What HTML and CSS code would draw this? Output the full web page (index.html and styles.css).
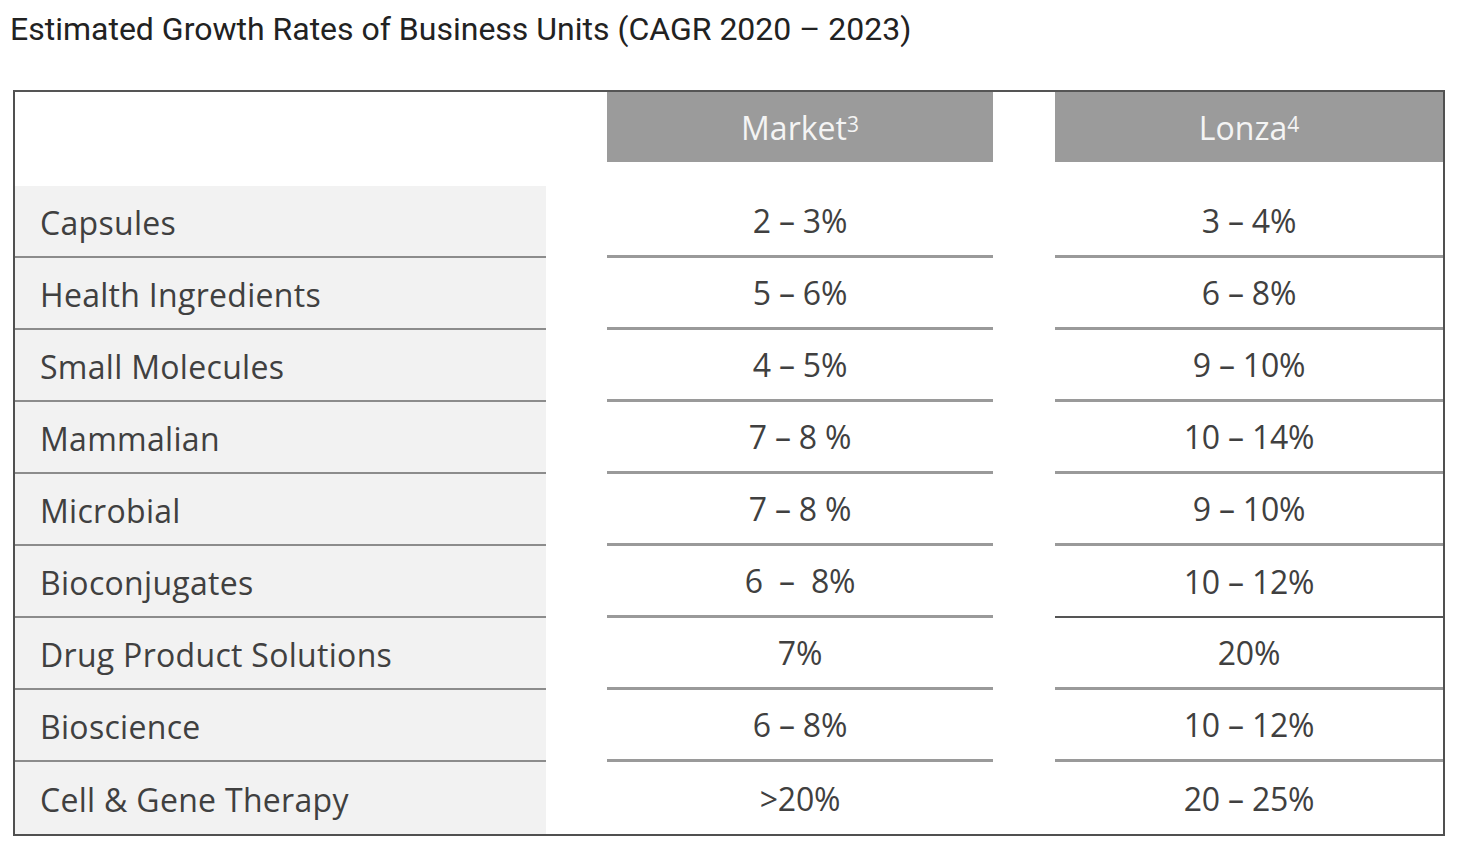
FILE: index.html
```html
<!DOCTYPE html>
<html>
<head>
<meta charset="utf-8">
<link rel="stylesheet" href="styles.css">
</head>
<body>
<h1 class="title">Estimated Growth Rates of Business Units (CAGR 2020 – 2023)</h1>
<div class="frame">
  <div class="grid">
    <div class="head-blank"></div>
    <div class="gap"></div>
    <div class="head"><div class="head-box">Market<sup>3</sup></div></div>
    <div class="gap"></div>
    <div class="head"><div class="head-box">Lonza<sup>4</sup></div></div>

    <div class="label sep">Capsules</div><div class="gap"></div><div class="val sep">2 – 3%</div><div class="gap"></div><div class="val sep">3 – 4%</div>
    <div class="label sep">Health Ingredients</div><div class="gap"></div><div class="val sep">5 – 6%</div><div class="gap"></div><div class="val sep">6 – 8%</div>
    <div class="label sep">Small Molecules</div><div class="gap"></div><div class="val sep">4 – 5%</div><div class="gap"></div><div class="val sep">9 – 10%</div>
    <div class="label sep">Mammalian</div><div class="gap"></div><div class="val sep">7 – 8 %</div><div class="gap"></div><div class="val sep">10 – 14%</div>
    <div class="label sep">Microbial</div><div class="gap"></div><div class="val sep">7 – 8 %</div><div class="gap"></div><div class="val sep">9 – 10%</div>
    <div class="label sep">Bioconjugates</div><div class="gap"></div><div class="val sep">6 &nbsp;–&nbsp; 8%</div><div class="gap"></div><div class="val sep dark">10 – 12%</div>
    <div class="label sep">Drug Product Solutions</div><div class="gap"></div><div class="val sep">7%</div><div class="gap"></div><div class="val sep">20%</div>
    <div class="label sep">Bioscience</div><div class="gap"></div><div class="val sep">6 – 8%</div><div class="gap"></div><div class="val sep">10 – 12%</div>
    <div class="label">Cell &amp; Gene Therapy</div><div class="gap"></div><div class="val">&gt;20%</div><div class="gap"></div><div class="val">20 – 25%</div>
  </div>
</div>
</body>
</html>
```

FILE: styles.css
```css
html, body {
  margin: 0;
  padding: 0;
  background: #ffffff;
}
body {
  width: 1458px;
  height: 852px;
  overflow: hidden;
}
.title {
  margin: 0;
  padding: 10px 0 0 10px;
  height: 38px;
  font-family: Roboto, "Liberation Sans", sans-serif;
  font-weight: 400;
  font-size: 32px;
  line-height: 38px;
  color: #222222;
  letter-spacing: 0;
}
.frame {
  margin: 42px 0 0 13px;
  width: 1428px;
  border: 2px solid #505050;
  border-top-color: #555555;
}
.grid {
  display: grid;
  grid-template-columns: 531px 61px 386px 62px 388px;
  grid-auto-rows: 72px;
  grid-template-rows: 94px;
  font-family: "Open Sans", Lato, sans-serif;
  font-size: 32px;
  color: #404040;
  letter-spacing: 0.3px;
}
.head-box {
  height: 70px;
  background: #9b9b9b;
  color: #f4f4f4;
  display: flex;
  align-items: center;
  justify-content: center;
  font-size: 32px;
  letter-spacing: 0;
}
.head-box sup {
  font-size: 21px;
  position: relative;
  top: -3px;
  vertical-align: super;
  line-height: 0;
}
.label {
  background: #f2f2f2;
  display: flex;
  align-items: center;
  padding-left: 25px;
  padding-top: 2px;
  box-sizing: border-box;
}
.label.sep {
  border-bottom: 2px solid #8c8c8c;
}
.val {
  display: flex;
  align-items: center;
  justify-content: center;
  padding-top: 0;
  box-sizing: border-box;
  letter-spacing: -0.2px;
}
.val.sep {
  border-bottom: 3px solid #9a9a9a;
}
.val.sep.dark {
  border-bottom: 2px solid #555555;
}
```
